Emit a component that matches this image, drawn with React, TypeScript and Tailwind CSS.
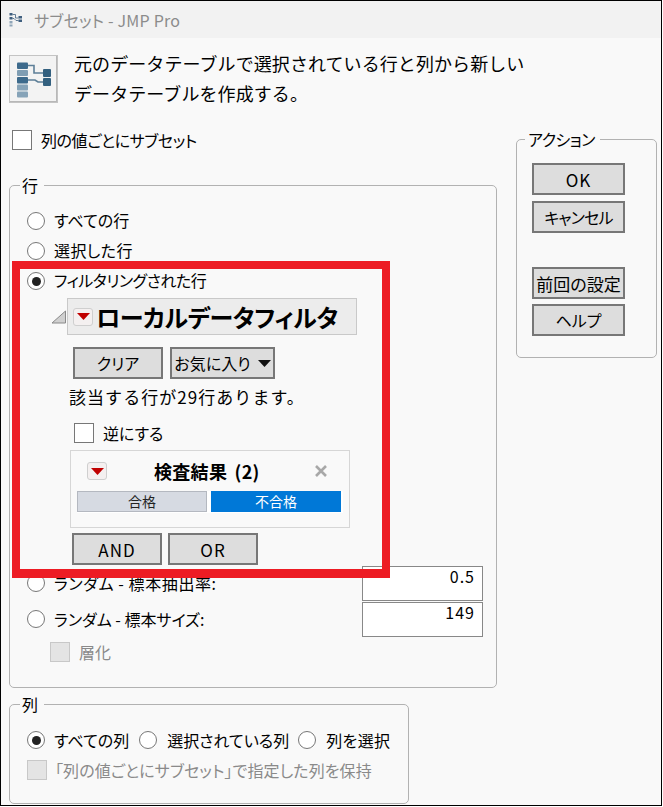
import React from "react";

const font = "[font-family:'Noto_Sans_CJK_JP','Noto_Sans',sans-serif]";

function Radio({ on }: { on?: boolean }) {
  return (
    <span className="flex h-[18px] w-[18px] shrink-0 items-center justify-center rounded-full border-[1.5px] border-[#777] bg-white">
      {on && <span className="h-[9px] w-[9px] rounded-full bg-[#222]" />}
    </span>
  );
}

function Check({ disabled }: { disabled?: boolean }) {
  return (
    <span className={disabled ? "h-[20px] w-[20px] shrink-0 border border-[#c8c8c8] bg-[#e4e4e4]" : "h-[20px] w-[20px] shrink-0 border border-[#777] bg-white"} />
  );
}

function Btn({ children, w = "w-[93px]", className = "" }: { children: React.ReactNode; w?: string; className?: string }) {
  return (
    <div className={`flex h-[32px] shrink-0 items-center justify-center border-2 border-[#777] bg-[#dddddd] leading-none text-black ${w} ${className}`}>
      {children}
    </div>
  );
}

function RedBtn() {
  return (
    <span className="flex h-[18px] w-[20px] shrink-0 items-center justify-center rounded-[3px] border border-[#cfcfcf] bg-[#f4f0f0]">
      <svg width="13" height="7" viewBox="0 0 13 7"><path d="M0 0h13L6.5 7z" fill="#c00000" /></svg>
    </span>
  );
}

function SmallIcon() {
  return (
    <svg width="14" height="15" viewBox="0 0 14 15" className="shrink-0">
      <g fill="#3f5f7f">
        <rect x="0.5" y="1" width="3" height="2.5" />
        <rect x="0.5" y="5" width="3" height="2.5" />
        <rect x="0.5" y="9" width="3" height="2.5" fill="#8fa5b8" />
        <rect x="0.5" y="12.5" width="3" height="2" fill="#8fa5b8" />
        <rect x="9.5" y="4" width="3.5" height="2.5" />
        <rect x="9.5" y="7.5" width="3.5" height="2.5" />
      </g>
      <path d="M3.5 2.5H6.5V6H9.5M3.5 6.5H5L7 8.5H9.5" stroke="#3f5f7f" strokeWidth="0.8" fill="none" />
    </svg>
  );
}

function BigIcon() {
  return (
    <div className="flex h-[48px] w-[49px] shrink-0 items-center justify-center border border-[#c4c4c4] bg-[#f3f3f3] shadow-[inset_-1px_-1px_0_#b8b8b8]">
      <svg width="36" height="38" viewBox="0 0 36 38" className="blur-[0.5px]">
        <rect x="1" y="2.5" width="11" height="6.5" rx="1" fill="#3d6a8c" />
        <rect x="1" y="10" width="11" height="6" rx="1" fill="#7f9db3" />
        <rect x="1" y="17" width="11" height="6.5" rx="1" fill="#3d6a8c" />
        <rect x="1" y="24.5" width="11" height="6" rx="1" fill="#86a3b8" />
        <rect x="1" y="31.5" width="11" height="6" rx="1" fill="#86a3b8" />
        <rect x="27" y="9" width="8" height="8" rx="1" fill="#33607f" />
        <rect x="27" y="18" width="8" height="8" rx="1" fill="#33607f" />
        <path d="M12 5.5H18V13H27M12 20H19L22 22H27" stroke="#5d7f98" strokeWidth="1.6" fill="none" />
      </svg>
    </div>
  );
}

export default function App() {
  return (
    <div className={`relative flex h-[806px] w-[662px] flex-col overflow-hidden border border-black bg-[#f9f9f9] text-[16px] text-black [font-feature-settings:'palt'] ${font}`}>
      {/* title bar */}
      <div className="flex h-[37px] shrink-0 items-center gap-[11px] bg-[#f2f2f2] pl-[8px]">
        <SmallIcon />
        <span className="text-[16px] tracking-[0.2px] text-[#8c8c8c]">サブセット - JMP Pro</span>
      </div>

      {/* description */}
      <div className="mt-[17px] flex pl-[8px]">
        <BigIcon />
        <div className="ml-[16px] text-[18px] leading-[30px] tracking-[0.08px] [font-feature-settings:normal]">
          <div className="-mt-[7px]">元のデータテーブルで選択されている行と列から新しい</div>
          <div>データテーブルを作成する。</div>
        </div>
      </div>

      <div className="flex flex-1 items-start">
        {/* left column */}
        <div className="w-[496px] shrink-0 pl-[8px]">
          <div className="mt-[22px] flex h-[20px] items-center pl-[3px]">
            <Check />
            <span className="ml-[9px] tracking-[-0.4px]">列の値ごとにサブセット</span>
          </div>

          <fieldset className="mt-[23px] h-[515px] rounded-[5px] border border-[#b2b2b2] pl-[17px]">
            <legend className="-ml-[7px] pl-[2px] pr-[6px] leading-[24px]">行</legend>
            <div className="mt-[9px] flex h-[30px] items-center gap-[9px]"><Radio /><span className="pb-[2px]">すべての行</span></div>
            <div className="flex h-[30px] items-center gap-[9px]"><Radio /><span className="pb-[2px] tracking-[0.4px]">選択した行</span></div>
            <div className="flex h-[30px] items-center gap-[9px]"><Radio on /><span className="pb-[2px] tracking-[-0.5px]">フィルタリングされた行</span></div>

            {/* local data filter */}
            <div className="ml-[24px] mt-[2px] flex h-[37px] items-center">
              <svg width="16" height="14" viewBox="0 0 16 14" className="shrink-0"><path d="M14.5 1V13H1z" fill="#d0d0d0" stroke="#8a8a8a" /></svg>
              <div className="flex h-[37px] w-[290px] items-center border border-[#c9c9c9] bg-[#ececec] pl-[5px]">
                <RedBtn />
                <span className="ml-[3px] text-[24px] font-bold leading-none tracking-[-0.4px]">ローカルデータフィルタ</span>
              </div>
            </div>
            <div className="ml-[46px] mt-[12px] flex gap-[7px]">
              <Btn w="w-[90px]">クリア</Btn>
              <Btn w="w-[105px]"><span>お気に入り</span><svg width="13" height="7" viewBox="0 0 13 7" className="ml-[7px]"><path d="M0 0h13L6.5 7z" fill="#111" /></svg></Btn>
            </div>
            <div className="ml-[42px] mt-[4px] flex h-[28px] items-center text-[17px] tracking-[1.05px] [font-feature-settings:normal]">該当する行が29行あります。</div>
            <div className="ml-[47px] mt-[12px] flex h-[20px] items-center">
              <Check />
              <span className="ml-[9px]">逆にする</span>
            </div>
            <div className="ml-[43px] mt-[7px] h-[78px] w-[280px] border border-[#d6d6d6] bg-[#f9f9f9] px-[6px]">
              <div className="flex h-[40px] items-center pl-[10px]">
                <RedBtn />
                <span className="ml-[47px] text-[18px] font-bold [word-spacing:3px] tracking-[0.3px]">検査結果 (2)</span>
                <svg width="12" height="12" viewBox="0 0 12 12" className="ml-[55px]"><path d="M1 1l10 10M11 1L1 11" stroke="#a8a8a8" strokeWidth="2.6" /></svg>
              </div>
              <div className="flex h-[22px] gap-[4px] bg-white">
                <div className="flex h-[21px] w-[130px] items-center justify-center border border-[#b4b8c0] bg-[#d6dae2] text-[14px] text-[#222]">合格</div>
                <div className="flex h-[21px] w-[130px] items-center justify-center bg-[#0078d7] text-[14px] text-white">不合格</div>
              </div>
            </div>
            <div className="ml-[45px] mt-[5px] flex gap-[6px]">
              <Btn w="w-[90px]"><span className="text-[17px] tracking-[1px]">AND</span></Btn>
              <Btn w="w-[90px]"><span className="text-[17px] tracking-[1px]">OR</span></Btn>
            </div>

            {/* random */}
            <div className="mt-[1px] flex h-[36px] items-start pr-[13px]">
              <div className="flex h-[35px] items-center gap-[9px] pb-[2px]"><Radio /><span className="tracking-[0.6px]">ランダム - 標本抽出率:</span></div>
              <div className="ml-auto h-[35px] w-[121px] border border-[#888] bg-white pr-[7px] text-right leading-[19px] tracking-[1px]">0.5</div>
            </div>
            <div className="flex h-[36px] items-start pr-[13px]">
              <div className="flex h-[35px] items-center gap-[9px] pb-[2px]"><Radio /><span>ランダム - 標本サイズ:</span></div>
              <div className="ml-auto h-[35px] w-[121px] border border-[#888] bg-white pr-[7px] text-right leading-[19px] tracking-[1px]">149</div>
            </div>
            <div className="ml-[23px] mt-[4px] flex h-[20px] items-center">
              <Check disabled />
              <span className="ml-[9px] text-[#8a8a8a]">層化</span>
            </div>
          </fieldset>

          <fieldset className="mt-[4px] h-[112px] w-[400px] rounded-[5px] border border-[#b2b2b2] pl-[17px]">
            <legend className="-ml-[7px] pl-[2px] pr-[6px] leading-[24px]">列</legend>
            <div className="mt-[9px] flex h-[30px] items-center">
              <Radio on /><span className="ml-[9px]">すべての列</span>
              <span className="ml-[10px]"><Radio /></span><span className="ml-[10px]">選択されている列</span>
              <span className="ml-[9px]"><Radio /></span><span className="ml-[10px] tracking-[0.4px]">列を選択</span>
            </div>
            <div className="mt-[5px] flex h-[20px] items-center">
              <Check disabled />
              <span className="ml-[8px] tracking-[0.1px] text-[#8a8a8a]">「列の値ごとにサブセット」で指定した列を保持</span>
            </div>
          </fieldset>
        </div>

        {/* actions */}
        <fieldset className="ml-[19px] mt-[19px] h-[231px] w-[141px] rounded-[5px] border border-[#b2b2b2] pl-[15px]">
          <legend className="-ml-[7px] pl-[3px] pr-[5px] leading-[24px] tracking-[-0.5px]">アクション</legend>
          <div className="mt-[12px] flex flex-col gap-[6px]">
            <Btn><span className="text-[17px] tracking-[1px]">OK</span></Btn>
            <Btn><span className="tracking-[-0.8px]">キャンセル</span></Btn>
            <Btn className="mt-[28px]"><span className="text-[17px]">前回の設定</span></Btn>
            <Btn className="-mt-[1px]">ヘルプ</Btn>
          </div>
        </fieldset>
      </div>

      {/* annotation overlay */}
      <div className="pointer-events-none absolute left-[11px] top-[260px] h-[317px] w-[378px] border-[8px] border-b-[9px] border-[#ed1c24]" />
    </div>
  );
}
